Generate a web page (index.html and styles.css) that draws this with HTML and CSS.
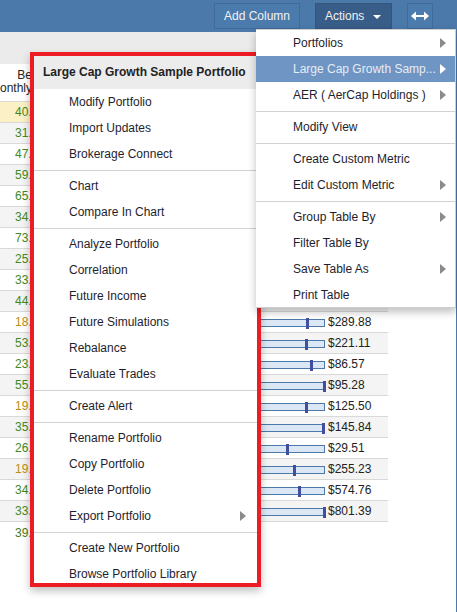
FILE: index.html
```html
<!DOCTYPE html>
<html lang="en">
<head>
  <meta charset="UTF-8">
  <title>Portfolio Actions</title>
  <link rel="stylesheet" href="styles.css">
</head>
<body>

  <div class="topbar">
    <button class="tb-btn">Add Column</button>
    <button class="tb-btn actions">Actions <span class="caret"></span></button>
    <button class="tb-btn expand">
      <svg width="18" height="10" viewBox="0 0 18 10"><path d="M0 5 L5 0.5 V4 H13 V0.5 L18 5 L13 9.5 V6 H5 V9.5 Z" fill="#fff"/></svg>
    </button>
  </div>

  <div class="content">
    <div class="subbar"></div>
    <div class="grid-head">
      <div class="head-cell">Be<br>Monthly</div>
    </div>
    <div id="rows"></div>
  </div>

  <div class="menu portfolio-menu">
    <div class="menu-title">Large Cap Growth Sample Portfolio</div>
    <div class="item">Modify Portfolio</div>
    <div class="item">Import Updates</div>
    <div class="item">Brokerage Connect</div>
    <div class="sep"></div>
    <div class="item">Chart</div>
    <div class="item">Compare In Chart</div>
    <div class="sep"></div>
    <div class="item">Analyze Portfolio</div>
    <div class="item">Correlation</div>
    <div class="item">Future Income</div>
    <div class="item">Future Simulations</div>
    <div class="item">Rebalance</div>
    <div class="item">Evaluate Trades</div>
    <div class="sep"></div>
    <div class="item">Create Alert</div>
    <div class="sep"></div>
    <div class="item">Rename Portfolio</div>
    <div class="item">Copy Portfolio</div>
    <div class="item">Delete Portfolio</div>
    <div class="item sub">Export Portfolio</div>
    <div class="sep"></div>
    <div class="item">Create New Portfolio</div>
    <div class="item">Browse Portfolio Library</div>
  </div>

  <div class="menu actions-menu">
    <div class="item sub">Portfolios</div>
    <div class="item sub active">Large Cap Growth Samp...</div>
    <div class="item sub">AER ( AerCap Holdings )</div>
    <div class="sep"></div>
    <div class="item">Modify View</div>
    <div class="sep"></div>
    <div class="item">Create Custom Metric</div>
    <div class="item sub">Edit Custom Metric</div>
    <div class="sep"></div>
    <div class="item sub">Group Table By</div>
    <div class="item">Filter Table By</div>
    <div class="item sub">Save Table As</div>
    <div class="item">Print Table</div>
  </div>

  <script>
    // value, warn, price, marker offset (px inside the bar)
    // rows under the Actions menu keep their bar but show no price
    const rows = [
      ['40.18', false, '', 50],
      ['31.72', false, '', 40],
      ['47.05', false, '', 62],
      ['59.33', false, '', 55],
      ['65.41', false, '', 47],
      ['34.26', false, '', 68],
      ['73.90', false, '', 30],
      ['25.64', false, '', 58],
      ['33.12', false, '', 44],
      ['44.87', false, '', 70],
      ['18.55', true, '$289.88', 56.7],
      ['53.20', false, '$221.11', 55.3],
      ['23.47', false, '$86.57', 60.3],
      ['55.09', false, '$95.28', 73],
      ['19.83', true, '$125.50', 55.3],
      ['35.61', false, '$145.84', 72.7],
      ['26.38', false, '$29.51', 36.3],
      ['19.02', true, '$255.23', 43.3],
      ['34.75', false, '$574.76', 48.7],
      ['33.96', false, '$801.39', 73.3]
    ];

    const rowsEl = document.getElementById('rows');

    rows.forEach((r, i) => {
      const row = document.createElement('div');
      row.className = 'row' + (i === 0 ? ' selected' : (i % 2 ? ' alt' : ''));
      row.innerHTML =
        `<div class="val${r[1] ? ' warn' : ''}">${r[0]}</div>` +
        '<div></div>' +
        `<div class="bar-cell"><div class="bar"><span class="marker" style="left:${r[3] - 1.5}px"></span></div></div>` +
        `<div class="price">${r[2]}</div>`;
      rowsEl.appendChild(row);
    });

    const total = document.createElement('div');
    total.className = 'row total';
    total.innerHTML = '<div class="val">39.44</div><div></div><div></div><div></div>';
    rowsEl.appendChild(total);
  </script>

</body>
</html>
```

FILE: styles.css
```css
body {
  margin: 0;
  font-family: 'Liberation Sans', Arial, sans-serif;
  font-size: 12px;
  color: #222;
  background-color: #fff;
  width: 457px;
  height: 612px;
  overflow: hidden;
}
.topbar {
  height: 32px;
  box-sizing: border-box;
  padding: 3px 24px 0 0;
  background-color: #4a79aa;
  display: flex;
  justify-content: flex-end;
  gap: 15px;
}
.tb-btn {
  height: 26px;
  padding: 0 9px;
  font-family: inherit;
  font-size: 12px;
  color: #f2f2f2;
  background-color: #4b7aac;
  border: 1px solid #41699a;
  display: flex;
  align-items: center;
}
.tb-btn.actions {
  width: 77px;
  background-color: #385d88;
  border-color: #33567f;
  gap: 9px;
}
.caret {
  width: 0;
  height: 0;
  border-left: 4px solid transparent;
  border-right: 4px solid transparent;
  border-top: 4px solid #fff;
  margin-top: 2px;
}
.tb-btn.expand {
  width: 26px;
  padding: 0;
  justify-content: center;
}
.content {
  width: 456px;
  height: 580px;
  border-right: 1px solid #4a79aa;
}
.subbar {
  height: 32px;
  background-color: #ebebeb;
}
.grid-head {
  height: 38px;
  width: 388px;
  box-sizing: border-box;
  border-bottom: 1px solid #d9d9d9;
}
.head-cell {
  width: 32px;
  text-align: right;
  line-height: 13px;
  padding-top: 5px;
  white-space: nowrap;
  direction: rtl;
}
.row {
  width: 388px;
  height: 21px;
  box-sizing: border-box;
  border-bottom: 1px solid #d9d9d9;
  display: grid;
  grid-template-columns: 40px 1fr 75px 63px;
  align-items: center;
}
.row.alt {
  background-color: #f4f4f4;
}
.row.selected {
  background-color: #fcf1c6;
}
.row.total {
  border-bottom: none;
}
.val {
  padding-left: 15px;
  color: #3f8a1e;
}
.val.warn {
  color: #b88f10;
}
.row.total .val {
  color: #4a7a14;
}
.bar {
  position: relative;
  height: 8px;
  margin-top: 1px;
  background-color: #dbe7f5;
  border: 1px solid #4a79aa;
  box-sizing: border-box;
}
.marker {
  position: absolute;
  top: -2px;
  width: 3px;
  height: 11px;
  background-color: #3f4f9e;
}
.price {
  padding-left: 3px;
  color: #222;
}
.menu {
  position: absolute;
  background-color: #fff;
  box-sizing: border-box;
  overflow: hidden;
}
.portfolio-menu {
  left: 30px;
  top: 52px;
  width: 231px;
  height: 535px;
  border: 4px solid #ed1c24;
  box-shadow: 0 4px 8px rgba(0, 0, 0, 0.25);
}
.actions-menu {
  left: 256px;
  top: 29px;
  width: 200px;
  height: 279px;
  border: 1px solid #cfcfcf;
  border-left: none;
  box-shadow: 0 4px 8px rgba(0, 0, 0, 0.25);
}
.menu-title {
  height: 33px;
  line-height: 33px;
  padding-left: 9px;
  font-weight: bold;
  background-color: #ececec;
  white-space: nowrap;
}
.item {
  position: relative;
  height: 26px;
  line-height: 26px;
  padding-left: 35px;
  white-space: nowrap;
  color: #1e1e2e;
}
.actions-menu .item {
  padding-left: 37px;
}
.item.sub::after {
  content: '';
  position: absolute;
  right: 11px;
  top: 8px;
  border-top: 5px solid transparent;
  border-bottom: 5px solid transparent;
  border-left: 6px solid #8a8a8a;
}
.actions-menu .item.sub::after {
  right: 9px;
}
.item.active {
  background-color: #6e95c3;
  color: #e8ecf4;
}
.item.active::after {
  border-left-color: #fff;
}
.sep {
  height: 1px;
  margin: 3px 0 2px;
  background-color: #d2d2d2;
}
```
